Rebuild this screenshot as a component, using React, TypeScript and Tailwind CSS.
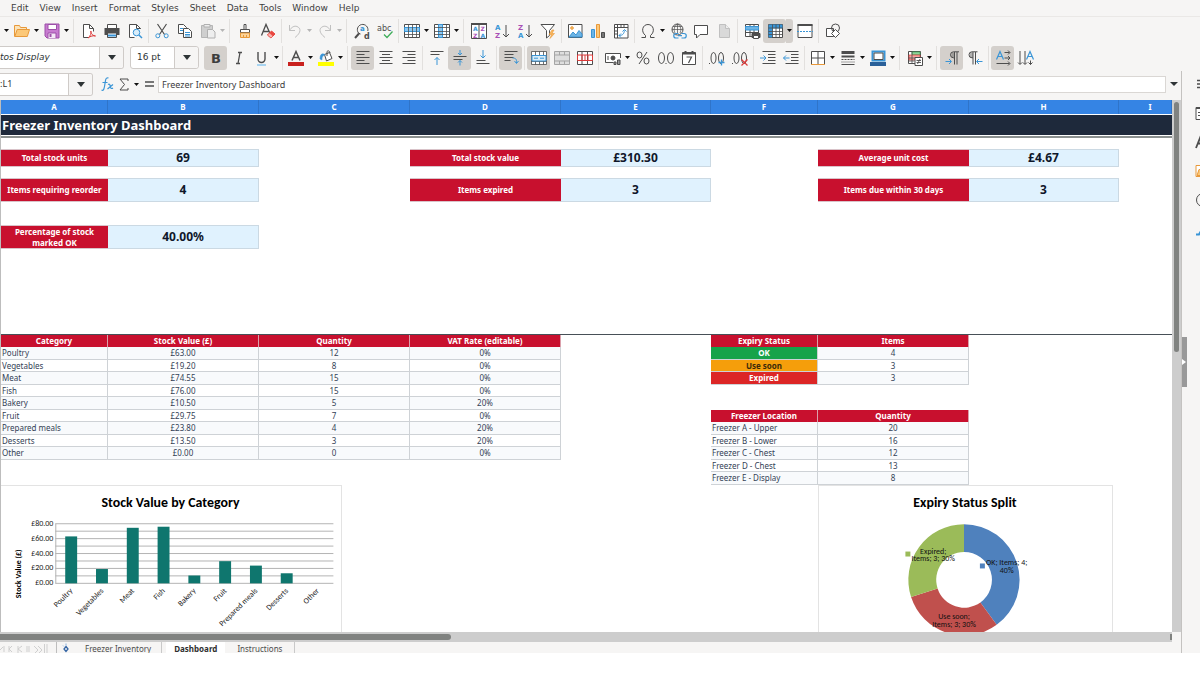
import { ReactNode } from "react";
import clsx from "clsx";

const G = "#4d4d4d";
const B = "#3a95d6";

const menus = ["Edit", "View", "Insert", "Format", "Styles", "Sheet", "Data", "Tools", "Window", "Help"];

const categories = [
    { name: "Poultry", value: 63, qty: 12, vat: "0%" },
    { name: "Vegetables", value: 19.2, qty: 8, vat: "0%" },
    { name: "Meat", value: 74.55, qty: 15, vat: "0%" },
    { name: "Fish", value: 76, qty: 15, vat: "0%" },
    { name: "Bakery", value: 10.5, qty: 5, vat: "20%" },
    { name: "Fruit", value: 29.75, qty: 7, vat: "0%" },
    { name: "Prepared meals", value: 23.8, qty: 4, vat: "20%" },
    { name: "Desserts", value: 13.5, qty: 3, vat: "20%" },
    { name: "Other", value: 0, qty: 0, vat: "0%" },
];

const statuses = [
    { name: "OK", items: 4, style: "bg-[#16a34a] text-white" },
    { name: "Use soon", items: 3, style: "bg-[#f59e0b] text-[#3b2a0a]" },
    { name: "Expired", items: 3, style: "bg-[#dc2626] text-white" },
];

const locations = [
    { name: "Freezer A - Upper", qty: 20 },
    { name: "Freezer B - Lower", qty: 16 },
    { name: "Freezer C - Chest", qty: 12 },
    { name: "Freezer D - Chest", qty: 13 },
    { name: "Freezer E - Display", qty: 8 },
];

function Icon({ children }: { children: ReactNode }) {
    return (
        <svg viewBox="0 0 16 16" className="w-4 h-4 shrink-0 overflow-visible" fill="none" stroke={G} strokeWidth="1" aria-hidden="true">
            {children}
        </svg>
    );
}

function Letter({ x, y, size, fill, bold, children }: {
    x: number, y: number, size: number, fill: string, bold?: boolean, children: ReactNode
}) {
    return (
        <text x={x} y={y} fontSize={size} fill={fill} stroke="none" fontWeight={bold ? 700 : 400} fontFamily="DejaVu Sans, sans-serif">
            {children}
        </text>
    );
}

function Tool({ label, active, children }: { label: string, active?: boolean, children: ReactNode }) {
    return (
        <button
            type="button"
            aria-label={label}
            aria-pressed={active}
            className={clsx("w-[23px] h-6 shrink-0 flex items-center justify-center rounded-[3px]", active && "bg-[#d4d0cc]")}
        >
            <Icon>{children}</Icon>
        </button>
    );
}

function Drop({ label, faded, active }: { label: string, faded?: boolean, active?: boolean }) {
    return (
        <button
            type="button"
            aria-label={label}
            className={clsx("w-[7px] h-6 shrink-0 flex items-center justify-center", active && "bg-[#d4d0cc] rounded-r-[3px]")}
        >
            <svg viewBox="0 0 5 3" className="w-[5px] h-[3px]" aria-hidden="true">
                <path d="M0 0h5L2.5 3z" fill={faded ? "#b5b5b5" : "#111"} />
            </svg>
        </button>
    );
}

function Sep({ size = "sm" }: { size?: "sm" | "md" | "lg" }) {
    const width = { sm: "w-1", md: "w-[5px]", lg: "w-[7px]" }[size];
    return (
        <div className={clsx("h-6 shrink-0 flex justify-center", width)}>
            <div className="w-px h-6 bg-[#e2e0de]"></div>
        </div>
    );
}

function ComboArrow({ label }: { label: string }) {
    return (
        <button type="button" aria-label={label} className="w-6 shrink-0 flex items-center justify-center border-l border-[#cfcbc8] bg-[#f6f5f4] rounded-r-[3px]">
            <svg viewBox="0 0 8 5" className="w-2 h-[5px]" aria-hidden="true"><path d="M0 0h8L4 5z" fill="#2e3436" /></svg>
        </button>
    );
}

function MenuBar() {
    return (
        <nav className="h-[17px] pl-[11px] flex items-center gap-[11px] border-b border-[#eae8e6] text-[9px] leading-4 text-[#3d3d3d]">
            {menus.map(menu => (
                <button type="button" key={menu}>{menu}</button>
            ))}
        </nav>
    );
}

function StandardBar() {
    return (
        <div className="h-[27px] pl-[3px] flex items-center">
            <Drop label="New" />
            <Tool label="Open">
                <path d="M.5 13.5v-11h5l1 2h6v2" stroke="#e8993a" fill="#fbe3b8" />
                <path d="M.8 13.5l2.4-7h12.3l-2.2 7z" stroke="#e8993a" fill="#fcc878" />
            </Tool>
            <Drop label="Open recent" />
            <Tool label="Save">
                <path d="M1 1h14v14H3l-2-2z" stroke="#9c4fa8" fill="#c77bd0" />
                <path d="M4 1.5h8.5v5H4z" fill="#fff" stroke="#9c4fa8" />
                <path d="M4 15v-5h8v5" fill="#f5e8f7" stroke="#9c4fa8" />
                <path d="M6.5 11v3" stroke="#9c4fa8" strokeWidth="2" />
            </Tool>
            <Drop label="Save options" />
            <Sep size="lg" />
            <Tool label="Export as PDF">
                <path d="M7 14.5H2.5v-13h6l4 4v3" fill="#fff" />
                <path d="M8.5 1.5v4h4" />
                <path d="M7 15c2.500-2 3.500-5 3-7c-.8 0 0 4.500 4.500 5c-2-.6-5 0-7.500 2z" stroke="#dd3b3b" />
            </Tool>
            <Tool label="Print">
                <path d="M3.500 5.500v-4h9v4" fill="#fff" />
                <rect x="1" y="5.500" width="14" height="6" fill={G} />
                <path d="M3.500 10h9v4.500h-9z" fill="#fff" />
                <path d="M4 12.500h8" stroke={B} strokeWidth="2" />
            </Tool>
            <Tool label="Print preview">
                <path d="M13.500 6V5.500l-4-4h-7v13h5" fill="#fff" />
                <path d="M9.500 1.500v4h4" />
                <circle cx="9.500" cy="9.500" r="3.300" stroke={B} fill="#d9edf9" />
                <path d="M12 12l3 3" stroke={B} strokeWidth="1.500" />
            </Tool>
            <Sep />
            <Tool label="Cut">
                <path d="M3.500 1l7 10.500M12.500 1l-7 10.500" strokeWidth="1.200" />
                <circle cx="3.800" cy="12.800" r="2" stroke={B} />
                <circle cx="12.200" cy="12.800" r="2" stroke={B} />
            </Tool>
            <Tool label="Copy">
                <path d="M1.500 1.500h5l3 3v6h-8z" fill="#fff" />
                <path d="M3 5.500h3M3 7.500h3" stroke={B} />
                <path d="M6.500 5.500h5l3 3v6h-8z" fill="#fff" />
                <path d="M8 9.500h5M8 11.500h5M8 13h5" stroke={B} />
            </Tool>
            <Tool label="Paste">
                <path d="M1.500 2.500h11v12h-11z" fill="#cfcfcf" stroke="#b5b5b5" />
                <path d="M4 1.500h6v2.500H4z" fill="#eee" stroke="#b0b0b0" />
                <path d="M7.500 6.500h5l2.500 2.500v6H7.500z" fill="#eee" stroke="#b0b0b0" />
            </Tool>
            <Drop label="Paste options" faded />
            <Sep size="lg" />
            <Tool label="Clone formatting">
                <path d="M7 1.500h2v5H7z" fill="#fff" />
                <path d="M3.500 6.500h9v3h-9z" fill="#fff" />
                <path d="M3.500 10h9v4.500h-9z" stroke="#e8993a" fill="#fcd49a" />
                <path d="M6.500 14v-2M9.500 14v-2" stroke="#e8993a" />
            </Tool>
            <Tool label="Clear formatting">
                <path d="M1.500 12.500l4.500-11 4.500 10M3.500 8.500h5.500" strokeWidth="1.300" />
                <path d="M7.500 12l4-4 3.500 3-4 4z" fill="#e9463f" stroke="#e9463f" />
                <path d="M7.500 12l2-2 3.500 3-2 2z" fill="#f7b5b1" stroke="#e9463f" strokeWidth=".5" />
            </Tool>
            <Sep />
            <Tool label="Undo">
                <path d="M2.500 2v5.500H8M2.500 7.500c2-3.500 5-5 7.500-4c4 1.500 4.500 6-2 11" stroke="#c0c0c0" />
            </Tool>
            <Drop label="Undo list" faded />
            <Tool label="Redo">
                <path d="M13.500 2v5.500H8M13.500 7.500c-2-3.500-5-5-7.500-4c-4 1.500-4.500 6 2 11" stroke="#c0c0c0" />
            </Tool>
            <Drop label="Redo list" faded />
            <Sep size="lg" />
            <Tool label="Find and replace">
                <path d="M5 10.500L1 15" strokeWidth="2" />
                <path d="M4.500 10a5.300 5.300 0 1 1 9.300-2M4.500 10l2 1" />
                <Letter x={6} y={8} size={7} fill={B} bold>a</Letter>
                <Letter x={10} y={15.500} size={8} fill={G} bold>d</Letter>
            </Tool>
            <Tool label="Spelling">
                <Letter x={0} y={8} size={8} fill={G}>abc</Letter>
                <path d="M7 11.500l3 3 5.500-6" stroke="#3fae5a" strokeWidth="1.300" />
            </Tool>
            <Sep />
            <Tool label="Row">
                <path d="M.5 1.500h15v13H.5z" fill="#fff" />
                <path d="M.5 4.500h15v4H.5z" fill="#8cc8f0" stroke={B} />
                <path d="M.5 11.500h15M4.500 1.500v13M8.500 1.500v13M12.500 1.500v13" strokeWidth=".8" />
            </Tool>
            <Drop label="Row options" />
            <Tool label="Column">
                <path d="M.5 1.500h15v13H.5z" fill="#fff" />
                <path d="M4.500 1.500h4v13h-4z" fill="#8cc8f0" stroke={B} />
                <path d="M.5 4.500h15M.5 8.500h15M.5 11.500h15M12.500 1.500v13" strokeWidth=".8" />
            </Tool>
            <Drop label="Column options" />
            <Sep size="lg" />
            <Tool label="Sort">
                <path d="M.5 1h15v14.500H.5zM8 1v14" fill="#fff" />
                <path d="M0 1h16" strokeWidth="2" />
                <Letter x={2} y={8} size={6} fill={B} bold>A</Letter>
                <Letter x={2} y={15} size={6} fill="#a94fb5" bold>Z</Letter>
                <Letter x={9.500} y={8} size={6} fill="#a94fb5" bold>Z</Letter>
                <Letter x={9.500} y={15} size={6} fill={B} bold>A</Letter>
            </Tool>
            <Tool label="Sort ascending">
                <Letter x={1} y={6.500} size={7} fill={B} bold>A</Letter>
                <Letter x={1} y={15} size={7} fill="#a94fb5" bold>Z</Letter>
                <path d="M12 2v12M9 11l3 3 3-3" />
            </Tool>
            <Tool label="Sort descending">
                <Letter x={1} y={6.500} size={7} fill="#a94fb5" bold>Z</Letter>
                <Letter x={1} y={15} size={7} fill={B} bold>A</Letter>
                <path d="M12 2v12M9 11l3 3 3-3" />
            </Tool>
            <Tool label="AutoFilter">
                <path d="M1 1.500h13.500l-5 6v5l-3 2.500V7.500z" fill="#fff" />
                <path d="M12 7l-3 4.500h2.500L10 15.500l4.500-5H12l2-3.500z" fill="#f9b65c" stroke="#e8993a" strokeWidth=".6" />
            </Tool>
            <Sep />
            <Tool label="Insert image">
                <path d="M1.500 1.500h13.500v13H1.500z" fill="#fff" />
                <circle cx="5" cy="5" r="1.300" stroke="#e8993a" fill="#fcc878" />
                <path d="M2 14l4-5 3 3 3-4.500 3 3.500v3z" fill="#6db4e4" stroke={B} />
            </Tool>
            <Tool label="Insert chart">
                <path d="M1.500 6.500h3v8h-3z" fill="#6db4e4" stroke={B} />
                <path d="M6.500 1.500h3v13h-3z" fill="#fcc878" stroke="#e8993a" />
                <path d="M11.500 9.500h3v5h-3z" fill="#777" />
            </Tool>
            <Tool label="Insert pivot table">
                <path d="M1.500 1.500h13.500v13.500H1.500zM1.500 4.500h13.500M4.500 1.500v13.500M8 2v2M11 2v2M2 8h2M2 11h2" fill="#fff" />
                <path d="M6 12.500c4 0 5-2 5.500-5M9.500 8.500l2-2 2 2M8 10.500l-2 2 2 2" stroke={B} />
            </Tool>
            <Sep />
            <Tool label="Special character">
                <path d="M1.500 14.500h4v-2c-5-4-3-11 2.500-11s7.500 7 2.500 11v2h4" />
            </Tool>
            <Drop label="Recent characters" />
            <Tool label="Insert hyperlink">
                <circle cx="7.500" cy="6.500" r="5.500" />
                <path d="M2 6.500h11M7.500 1v9M5 10c-1.500-3-1-7 2.500-9c3.500 2 4 6 2.500 9M3 3.500h9" strokeWidth=".7" />
                <path d="M8.500 10.500H6a2 2 0 0 0 0 4.500h2.500M11.500 10.500H14a2 2 0 0 1 0 4.500h-2.500M8 12.700h4" stroke={B} strokeWidth="1.200" />
            </Tool>
            <Tool label="Insert comment">
                <path d="M1.500 2.500h13v9H7l-3.500 3.500v-3.500h-2z" fill="#fff" />
            </Tool>
            <Tool label="Headers and footers">
                <path d="M3.500 1.500h6l4 4v9h-10z" fill="#d9d9d9" stroke="#c0c0c0" />
                <path d="M9.500 1.500v4h4" fill="#eee" stroke="#c0c0c0" />
            </Tool>
            <Sep size="md" />
            <Tool label="Print range">
                <path d="M1.500 1.500h13v12h-13zM6 1.500v12M10 1.500v12M1.500 9.500h13" fill="#fff" />
                <path d="M1.500 3.500h13v3.500h-13z" fill="#6db4e4" stroke={B} />
                <path d="M8 10.500h8v4H8z" fill={G} />
                <path d="M9.500 12.500h5v3h-5z" fill="#fff" />
            </Tool>
            <Tool label="Freeze rows and columns" active>
                <path d="M1.500 1.500h14v13h-14z" fill="#fff" />
                <path d="M2 2h13v3H5v9H2z" fill="#3a95d6" stroke={B} />
                <path d="M1.500 5h14M1.500 8.500h14M1.500 11.500h14M5.500 1.500v13M9 1.500v13M12.500 1.500v13" strokeWidth=".8" />
            </Tool>
            <Drop label="Freeze options" active />
            <Tool label="Split window">
                <path d="M1 1.500h14v13H1z" fill="#fff" />
                <path d="M.5 2h15" strokeWidth="2" />
                <path d="M0 8.500h16" stroke={B} strokeDasharray="2 1" />
            </Tool>
            <Sep size="md" />
            <Tool label="Show draw functions">
                <path d="M1.500 5.500h7v8h-7z" fill="#fff" />
                <circle cx="10.500" cy="5" r="4" />
                <path d="M10.500 6.500l4 4-4 4-4-4z" fill="#fff" />
            </Tool>
        </div>
    );
}

function FormattingBar() {
    return (
        <div className="h-[27px] flex items-center">
            <div className="w-[124px] h-[23px] mr-[6px] shrink-0 flex border border-l-0 border-[#cfcbc8] rounded-r-[3px] bg-white">
                <input aria-label="Font name" defaultValue="tos Display" className="min-w-0 flex-1 text-[9px] italic text-[#2e3436] outline-none" />
                <ComboArrow label="Font list" />
            </div>
            <div className="w-[69px] h-[23px] mr-[5px] shrink-0 flex border border-[#cfcbc8] rounded-[3px] bg-white">
                <input aria-label="Font size" defaultValue="16 pt" className="min-w-0 flex-1 pl-[6px] text-[9px] text-[#2e3436] outline-none" />
                <ComboArrow label="Size list" />
            </div>
            <Tool label="Bold" active><Letter x={3} y={12.500} size={13} fill="#3d3d3d" bold>B</Letter></Tool>
            <Tool label="Italic"><path d="M7 2.500h4M5 13.500h4M9 2.500l-2 11" strokeWidth="1.300" /></Tool>
            <Tool label="Underline">
                <path d="M4 2v7a3.500 3.500 0 0 0 7 0V2" strokeWidth="1.400" />
                <path d="M3 15h9" stroke="#8cc8f0" strokeWidth="1.500" />
            </Tool>
            <Drop label="Underline options" />
            <Sep />
            <Tool label="Font color">
                <path d="M4 10.500l4-9 4 9M5.500 7.500h5" strokeWidth="1.500" />
                <path d="M0 14h16" stroke="#c9211e" strokeWidth="4" />
            </Tool>
            <Drop label="Font color options" />
            <Tool label="Highlighting">
                <path d="M6.500 4.500l5-2 2.500 6-5.500 2.500z" fill="#fff" />
                <path d="M9 6V1.500c1.500-1.500 3 0 3 1.500" />
                <path d="M2 9c0-5 2-6 5-4.500l-2 1.500c-1 1-1 2-1 4z" fill={B} stroke={B} strokeWidth=".5" />
                <path d="M0 14h16" stroke="#ffff00" strokeWidth="4" />
            </Tool>
            <Drop label="Highlighting options" />
            <Sep size="lg" />
            <Tool label="Align left" active><path d="M1.500 1.500h13M1.500 4.500h8M1.500 7.500h13M1.500 10.500h8M1.500 13.500h13" /></Tool>
            <Tool label="Align center"><path d="M1.500 1.500h13M4 4.500h8M1.500 7.500h13M4 10.500h8M1.500 13.500h13" /></Tool>
            <Tool label="Align right"><path d="M1.500 1.500h13M6.500 4.500h8M1.500 7.500h13M6.500 10.500h8M1.500 13.500h13" /></Tool>
            <Sep size="md" />
            <Tool label="Align top">
                <path d="M1.500 1.500h13M1.500 4.500h9" />
                <path d="M8 15V7.500M5.500 10L8 7.500l2.500 2.500" stroke={B} />
            </Tool>
            <Tool label="Center vertically" active>
                <path d="M1.500 6.500h13M1.500 9.500h9" />
                <path d="M8 0v5M6 3l2 2 2-2M8 15.500v-5M6 12.500l2-2 2 2" stroke={B} />
            </Tool>
            <Tool label="Align bottom">
                <path d="M1.500 10.500h9M1.500 13.500h13" />
                <path d="M8 0v8M5.500 5.500L8 8l2.500-2.500" stroke={B} />
            </Tool>
            <Sep size="md" />
            <Tool label="Wrap text" active>
                <path d="M1.500 1.500h13M1.500 4.500h9M1.500 7.500h9M1.500 10.500h6" />
                <path d="M9.500 8c3 0 4.500 1 4 5M11.500 11l2 2.500 2-2.500" stroke={B} />
            </Tool>
            <Sep size="md" />
            <Tool label="Merge and center cells" active>
                <path d="M.5 1.500h15v13H.5zM.5 11.500h15M4.500 1.500v13M8.500 1.500v13M12.500 1.500v13" fill="#fff" strokeWidth=".8" />
                <path d="M1 5.500h14v5.500H1z" fill="#d9edf9" stroke={B} />
                <path d="M3 8.200h10" stroke={B} strokeDasharray="4 2" />
            </Tool>
            <Tool label="Merge cells">
                <path d="M.5 1.500h15v13H.5zM.5 5h15M.5 11h15M5.500 1.500V5M10.500 1.500V5M5.500 11v3.500M10.500 11v3.500" fill="#dedede" stroke="#a5a5a5" />
            </Tool>
            <Tool label="Unmerge cells">
                <path d="M.5 1.500h15v13H.5zM5 1.500v13M10.500 1.500v13" fill="#fff" />
                <path d="M.5 5h15M.5 10.500h15M5 5v5.500M8 5v5.500M11 5v5.500M.5 5v5.500M15.500 5v5.500" stroke="#dd3b3b" />
            </Tool>
            <Sep size="md" />
            <Tool label="Format as currency">
                <path d="M15.500 8V3.500H.5v9h8" fill="#fff" />
                <circle cx="8" cy="8" r="2" fill={G} />
                <path d="M9 12h2v2.500H9zM12.500 10H15v4.500h-2.500zM3 6v4" fill="#999" />
            </Tool>
            <Drop label="Currency options" />
            <Tool label="Format as percent">
                <ellipse cx="4.500" cy="5" rx="2.500" ry="3" /><ellipse cx="11.500" cy="11" rx="2.500" ry="3" /><path d="M12 2L4 14" />
            </Tool>
            <Tool label="Format as number">
                <ellipse cx="3.500" cy="8" rx="3" ry="5.500" /><ellipse cx="12.500" cy="8" rx="3" ry="5.500" /><path d="M7.500 13.500h1" />
            </Tool>
            <Tool label="Format as date">
                <path d="M1.500 2.500h13v12h-13z" fill="#fff" />
                <path d="M1.500 3.500h13M4.500 1v3M11.500 1v3" strokeWidth="2" />
                <path d="M5.500 7h5l-3 6" strokeWidth="1.200" />
            </Tool>
            <Sep size="md" />
            <Tool label="Add decimal place">
                <path d="M0 13.500h1" /><ellipse cx="4.500" cy="8" rx="2.500" ry="5.500" /><ellipse cx="12" cy="8" rx="2.500" ry="5.500" />
                <path d="M12.500 9.500v6M9.500 12.500h6" stroke={B} strokeWidth="1.300" />
            </Tool>
            <Tool label="Delete decimal place">
                <path d="M0 13.500h1" /><ellipse cx="4.500" cy="8" rx="2.500" ry="5.500" /><ellipse cx="12" cy="8" rx="2.500" ry="5.500" />
                <path d="M9.500 9.500l6 6M15.500 9.500l-6 6" stroke="#dd3b3b" strokeWidth="1.200" />
            </Tool>
            <Sep size="md" />
            <Tool label="Increase indent">
                <path d="M2.500 1.500h13M8 4.500h7.500M8 7.500h7.500M8 10.500h7.500M2.500 13.500h13" />
                <path d="M0 8h6M3.500 5.500L6 8l-2.500 2.500" stroke={B} />
            </Tool>
            <Tool label="Decrease indent">
                <path d="M2.500 1.500h13M8 4.500h7.500M8 7.500h7.500M8 10.500h7.500M2.500 13.500h13" />
                <path d="M.5 8h6M3 5.500L.5 8 3 10.500" stroke={B} />
            </Tool>
            <Sep />
            <Tool label="Borders">
                <path d="M1.500 14.500v-13h13v13M1.500 8h13M8 1.500v13" fill="#fff" />
                <path d="M1 14.500h14" stroke="#e8993a" />
            </Tool>
            <Drop label="Border options" />
            <Tool label="Border style">
                <path d="M1.500 2.500h13" strokeWidth="3" /><path d="M1.500 6.500h13" strokeWidth="2" />
                <path d="M1.500 9.500h13" strokeDasharray="2 1" /><path d="M1.500 12h13" strokeDasharray="1 1" /><path d="M1.500 14.500h13" />
            </Tool>
            <Drop label="Border style options" />
            <Tool label="Border color">
                <path d="M2.500 1.500h12v9h-12z" fill="#fff" stroke={B} strokeWidth="2" />
                <path d="M4 3h9v6.500H4z" />
                <path d="M0 14h16" stroke="#2a6099" strokeWidth="4" />
            </Tool>
            <Drop label="Border color options" />
            <Sep size="lg" />
            <Tool label="Conditional formatting">
                <path d="M1.500 1.500h12v12h-12z" fill="#fff" />
                <path d="M5 2h8v2.500H5z" fill="#8fd19a" stroke="#3fae5a" strokeWidth=".7" />
                <path d="M2 5h11v5H2z" fill="#f7a5a1" stroke="#dd3b3b" strokeWidth=".7" />
                <path d="M5 1.500v12M1.500 8h12M1.500 11h6" strokeWidth=".8" />
                <path d="M8 7.500h7.500v8H8z" fill="#fff" />
                <path d="M9.500 10.500H14M9.500 12.500H14M13 9l-2.500 5" strokeWidth=".9" />
            </Tool>
            <Drop label="Conditional options" />
            <Sep size="lg" />
            <Tool label="Left to right" active>
                <path d="M13 2v12.500M10.500 2v12.500M15 1.800H9.500a3 3 0 0 0 0 6h1" />
                <path d="M7.500 2.500h3v5h-3z" fill={G} opacity=".4" stroke="none" />
                <path d="M1.500 11.500H7M5 9l2.500 2.500L5 14" stroke={B} />
            </Tool>
            <Tool label="Right to left">
                <path d="M8.500 2v12.500M6 2v12.500M10.500 1.800H5a3 3 0 0 0 0 6h1" />
                <path d="M3 2.500h3v5H3z" fill={G} opacity=".4" stroke="none" />
                <path d="M15.500 11.500H10M12 9l-2.500 2.500L12 14" stroke={B} />
            </Tool>
            <Sep size="md" />
            <Tool label="Text direction from left to right" active>
                <path d="M1.500 9.500L5 1.500l3.500 8M3 6.500h4" stroke={B} strokeWidth="1.200" />
                <path d="M9.500 2.500h5M13 .5l2 2-2 2M9.500 8h5M13 6l2 2-2 2M1.500 13.500h13M13 11.500l2 2-2 2" />
            </Tool>
            <Tool label="Text direction from top to bottom">
                <path d="M8.500 9.500L12 1.500l3.500 8M10 6.500h4" stroke={B} strokeWidth="1.200" />
                <path d="M2 1v13M0 12.500l2 2 2-2M7 1v13M5 12.500l2 2 2-2M12.500 10.500v4M10.500 12.500l2 2 2-2" />
            </Tool>
        </div>
    );
}

function FormulaBar() {
    return (
        <div className="h-[29px] pb-[3px] flex items-center">
            <div className="w-[93px] h-[23px] mr-[2px] shrink-0 flex border border-l-0 border-[#cfcbc8] rounded-r-[3px] bg-white">
                <input aria-label="Name box" defaultValue=":L1" className="min-w-0 flex-1 text-[9px] text-[#2e3436] outline-none" />
                <ComboArrow label="Named ranges" />
            </div>
            <Tool label="Function wizard">
                <path d="M2.500 14c2 1 2.500-1 3-3.500l1-6c.4-2.500 1.500-3 3-2.500M3.500 6.500h5" stroke={B} strokeWidth="1.200" />
                <path d="M9 8.500c1.500-1 2 0 2.300 2s1.300 2.500 2.700 1.500M14 8.500l-5.500 4.500" stroke={B} strokeWidth="1.200" />
            </Tool>
            <button type="button" aria-label="Select function" className="w-3 h-5 mr-[3px] shrink-0 flex items-center justify-center">
                <svg viewBox="0 0 10 13" className="w-[10px] h-[13px]" fill="none" stroke={G} aria-hidden="true">
                    <path d="M9 3V1H1l4.500 5.500L1 12h8v-2" />
                </svg>
            </button>
            <Drop label="Function list" />
            <button type="button" aria-label="Formula" className="w-[18px] h-5 shrink-0 flex items-center justify-center">
                <svg viewBox="0 0 9 6" className="w-[9px] h-[6px]" aria-hidden="true"><path d="M0 1h9M0 5h9" stroke={G} strokeWidth="1.500" /></svg>
            </button>
            <input
                aria-label="Input line"
                defaultValue="Freezer Inventory Dashboard"
                className="min-w-0 flex-1 h-[17px] pl-[3px] border border-[#dad7d4] bg-white font-['Noto_Sans',sans-serif] text-[9px] text-[#3d3d3d] outline-none"
            />
            <button type="button" aria-label="Expand formula bar" className="w-[15px] h-5 shrink-0 flex items-center justify-center">
                <svg viewBox="0 0 8 4" className="w-2 h-1" aria-hidden="true"><path d="M0 0h8L4 4z" fill="#2e3436" /></svg>
            </button>
        </div>
    );
}

function HeadCell({ children }: { children: ReactNode }) {
    return <th scope="col" className="p-0 bg-[#c8102e] text-white font-bold border-r border-[#dba0ab]">{children}</th>;
}

function ValueCell({ shade, children }: { shade: boolean, children: ReactNode }) {
    return (
        <td className={clsx("p-0 text-center border-r border-b border-[#ced2d6]", shade ? "bg-[#f8fafc]" : "bg-white")}>
            {children}
        </td>
    );
}

function NameCell({ shade, children }: { shade: boolean, children: ReactNode }) {
    return (
        <td className={clsx("p-0 pl-px text-left whitespace-nowrap border-r border-b border-[#ced2d6]", shade ? "bg-[#f8fafc]" : "bg-white")}>
            {children}
        </td>
    );
}

function Kpi({ label, value }: { label: string, value: string }) {
    return (
        <>
            <th scope="row" className="p-0 bg-[#c8102e] text-white font-bold text-center border-t border-b border-[#d9c3c9]">{label}</th>
            <td className="p-0 bg-[#e0f2fe] text-[#0f172a] text-[12px] leading-3 font-bold text-center border border-l-0 border-[#cbd9e3]">{value}</td>
        </>
    );
}

function Sheet() {
    return (
        <table className="w-full table-fixed border-separate border-spacing-0 text-[8px] leading-[10px] text-[#334155]">
            <colgroup>
                <col className="w-[107px]" />
                <col className="w-[151px]" />
                <col className="w-[151px]" />
                <col className="w-[151px]" />
                <col className="w-[150px]" />
                <col className="w-[107px]" />
                <col className="w-[151px]" />
                <col className="w-[150px]" />
                <col />
            </colgroup>
            <thead>
                <tr className="h-[14px]">
                    {["A", "B", "C", "D", "E", "F", "G", "H", "I"].map(col => (
                        <th scope="col" key={col} className="p-0 pb-px last:pl-[10px] bg-[#3584e4] text-white font-bold border-r border-[#2f74c9]">{col}</th>
                    ))}
                </tr>
            </thead>
            <tbody>
                <tr className="h-[22px]">
                    <th colSpan={9} className="p-0 pl-px text-left bg-[#1e293b] text-white text-[13px] leading-[18px] font-bold border-y border-white">
                        Freezer Inventory Dashboard
                    </th>
                </tr>
                <tr className="h-[13px]"><td colSpan={9} className="p-0 border-t-2 border-[#8b908f]"></td></tr>
                <tr className="h-[18px]">
                    <Kpi label="Total stock units" value="69" />
                    <td></td>
                    <Kpi label="Total stock value" value="£310.30" />
                    <td></td>
                    <Kpi label="Average unit cost" value="£4.67" />
                    <td></td>
                </tr>
                <tr className="h-[11px]"><td colSpan={9} className="p-0"></td></tr>
                <tr className="h-6">
                    <Kpi label="Items requiring reorder" value="4" />
                    <td></td>
                    <Kpi label="Items expired" value="3" />
                    <td></td>
                    <Kpi label="Items due within 30 days" value="3" />
                    <td></td>
                </tr>
                <tr className="h-[23px]"><td colSpan={9} className="p-0"></td></tr>
                <tr className="h-6 leading-[11px]">
                    <Kpi label="Percentage of stock marked OK" value="40.00%" />
                    <td colSpan={7}></td>
                </tr>
                <tr className="h-[86px]"><td colSpan={9} className="p-0 border-b border-[#475057]"></td></tr>
                <tr className="h-3">
                    <HeadCell>Category</HeadCell>
                    <HeadCell>Stock Value (£)</HeadCell>
                    <HeadCell>Quantity</HeadCell>
                    <HeadCell>VAT Rate (editable)</HeadCell>
                    <td className="p-0"></td>
                    <HeadCell>Expiry Status</HeadCell>
                    <HeadCell>Items</HeadCell>
                    <td className="p-0" colSpan={2}></td>
                </tr>
                {Array.from({ length: 11 }, (_, i) => {
                    const category = categories[i];
                    const status = statuses[i];
                    const location = locations[i - 6];
                    const shade = i % 2 === 0;
                    return (
                        <tr key={i} className={shade ? "h-[13px]" : "h-3"}>
                            {category ? (
                                <>
                                    <NameCell shade={shade}>{category.name}</NameCell>
                                    <ValueCell shade={shade}>£{category.value.toFixed(2)}</ValueCell>
                                    <ValueCell shade={shade}>{category.qty}</ValueCell>
                                    <ValueCell shade={shade}>{category.vat}</ValueCell>
                                </>
                            ) : <td className="p-0" colSpan={4}></td>}
                            <td className="p-0"></td>
                            {status && (
                                <>
                                    <th scope="row" className={clsx("p-0 font-bold text-center border-r border-b border-[#ced2d6]", status.style)}>{status.name}</th>
                                    <ValueCell shade={shade}>{status.items}</ValueCell>
                                </>
                            )}
                            {i === 5 && (
                                <>
                                    <HeadCell>Freezer Location</HeadCell>
                                    <HeadCell>Quantity</HeadCell>
                                </>
                            )}
                            {location && (
                                <>
                                    <NameCell shade={shade}>{location.name}</NameCell>
                                    <ValueCell shade={shade}>{location.qty}</ValueCell>
                                </>
                            )}
                            {!status && !location && i !== 5 && <td className="p-0" colSpan={2}></td>}
                            <td className="p-0" colSpan={2}></td>
                        </tr>
                    );
                })}
            </tbody>
        </table>
    );
}

function BarChart() {
    const base = 98;
    const scale = 60 / 80;
    return (
        <svg viewBox="0 0 341 147" className="w-[341px] h-[147px] shrink-0 border-t border-r border-[#e3e3e3] font-['Carlito','Lato',sans-serif]" role="img" aria-label="Stock Value by Category">
            <text x="170" y="21" textAnchor="middle" fontSize="14" fontWeight="700">Stock Value by Category</text>
            {[0, 10, 20, 30, 40, 50, 60, 70, 80].map(v => (
                <path key={v} d={`M54 ${base - v * scale}H334`} stroke="#b3b3b3" />
            ))}
            <path d="M54.500 38v60" stroke="#b3b3b3" />
            {[0, 20, 40, 60, 80].map(v => (
                <text key={v} x="52" y={base - v * scale + 2} textAnchor="end" fontSize="8" fill="#222">£{v.toFixed(2)}</text>
            ))}
            <text transform="translate(19 113) rotate(-90)" fontSize="8" fontWeight="700">Stock Value (£)</text>
            {categories.map((c, i) => {
                const x = 70 + i * 31;
                return (
                    <g key={c.name}>
                        <rect x={x - 6} y={base - c.value * scale} width="12" height={c.value * scale} fill="#0f766e" />
                        <text transform={`translate(${x + 2} 106) rotate(-45)`} textAnchor="end" fontSize="8" fill="#222">{c.name}</text>
                    </g>
                );
            })}
        </svg>
    );
}

function DonutChart() {
    return (
        <svg viewBox="0 0 295 147" className="w-[295px] h-[147px] shrink-0 bg-white border-t border-x border-[#e3e3e3] font-['Carlito','Lato',sans-serif]" role="img" aria-label="Expiry Status Split">
            <text x="147" y="21" textAnchor="middle" fontSize="14" fontWeight="700">Expiry Status Split</text>
            <path d="M146 38.500A56 56 0 0 1 178.900 139.800L162.500 117.200A28 28 0 0 0 146 66.500z" fill="#4f81bd" />
            <path d="M178.900 139.800A56 56 0 0 1 92.700 111.800L119.400 103.200A28 28 0 0 0 162.500 117.200z" fill="#c0504d" />
            <path d="M92.700 111.800A56 56 0 0 1 146 38.500V66.500A28 28 0 0 0 119.400 103.200z" fill="#9bbb59" />
            <rect x="87" y="66" width="5" height="5" fill="#9bbb59" />
            <rect x="162" y="78" width="5" height="5" fill="#4f81bd" />
            <g fontSize="8" textAnchor="middle" fill="#111">
                <text x="115" y="68">Expired;</text>
                <text x="115" y="76">Items; 3; 30%</text>
                <text x="189" y="80">OK; Items; 4;</text>
                <text x="189" y="88">40%</text>
                <text x="136" y="134">Use soon;</text>
                <text x="136" y="142">Items; 3; 30%</text>
            </g>
        </svg>
    );
}

function SheetTabs() {
    return (
        <div className="h-[11px] overflow-hidden flex items-start bg-[#f6f5f4] text-[8px] leading-[14px] text-[#4d4d4d]">
            <svg viewBox="0 0 48 11" className="w-12 h-[11px] shrink-0" fill="none" stroke="#cfcfcf" aria-hidden="true">
                <path d="M0 8l3-3M4 10V4M9 4v6M12 4l-3 3 3 3M18 4v7M22 4l-4 3 4 3M27 4v6M29 10V4M34 4l4 4-3 3M38 4l4 4-3 3M44.500 2v9M47 2v9" />
            </svg>
            <div className="w-px h-[11px] ml-2 bg-[#bdbdbd]"></div>
            <button type="button" aria-label="Add sheet" className="w-[18px] h-[11px] flex justify-center">
                <svg viewBox="0 0 8 11" className="w-2 h-[11px]" fill="none" aria-hidden="true">
                    <path d="M4 4.500l2 2.500-2 2.500L2 7z" stroke="#3465a4" strokeWidth="1.300" />
                    <path d="M4 1.500v2M1 3.500l1 1" stroke="#8ab0dc" />
                </svg>
            </button>
            <button type="button" className="px-[10px] border-r border-[#c9c9c9]">Freezer Inventory</button>
            <button type="button" aria-current="page" className="ml-1 px-2 bg-white font-bold text-[#2e2e2e]">Dashboard</button>
            <button type="button" className="px-[12px] border-r border-[#c9c9c9]">Instructions</button>
        </div>
    );
}

function Sidebar() {
    return (
        <aside className="w-[19px] shrink-0 overflow-hidden flex border-l border-[#c4c2c0]">
            <div className="w-[13px] shrink-0 flex items-center">
                <button type="button" aria-label="Hide sidebar" className="w-[5px] h-[50px] bg-[#999] flex items-center">
                    <svg viewBox="0 0 4 6" className="w-1 h-[6px]" aria-hidden="true"><path d="M0 0l4 3-4 3z" fill="#fff" /></svg>
                </button>
            </div>
            <div className="pt-[5px] flex flex-col gap-[13px]">
                <Icon><path d="M2 4.500h12M2 8h12M2 11.500h12" strokeWidth="1.500" /></Icon>
                <Icon><path d="M1 2.500h14v12H1zM3 7.500h5M3 10.500h5" fill="#fff" /><path d="M1 3h14" strokeWidth="2" /></Icon>
                <Icon><path d="M1 14L6 1.500 11 14M3 9.500h6" strokeWidth="1.800" /></Icon>
                <Icon><path d="M1 2.500h14v11H1z" stroke="#e8993a" fill="#fff" /><path d="M2 12.500l2-6h11v6z" fill="#fcc878" stroke="#e8993a" /></Icon>
                <Icon><circle cx="8" cy="8" r="6.500" /><path d="M5 11l6-6-2 4.500z" /></Icon>
                <Icon><path d="M1 13.500h3l5-9" stroke={B} strokeWidth="2" /></Icon>
            </div>
        </aside>
    );
}

export default function App() {
    return (
        <div className="min-h-screen bg-white font-['DejaVu_Sans',sans-serif]">
            <div className="bg-[#f6f5f4] overflow-hidden">
                <MenuBar />
                <StandardBar />
                <FormattingBar />
                <div className="flex">
                    <main className="min-w-0 flex-1 font-['Noto_Sans',sans-serif]">
                        <FormulaBar />
                        <div className="flex">
                            <div className="min-w-0 flex-1 bg-white border-l border-[#bdbdbd]">
                                <Sheet />
                                <div className="h-[147px] overflow-hidden flex">
                                    <BarChart />
                                    <div className="w-[476px] shrink-0"></div>
                                    <DonutChart />
                                </div>
                            </div>
                            <div className="w-[9px] shrink-0 pt-[2px] bg-[#cdcdcd] flex justify-center">
                                <div className="w-[5px] h-[250px] rounded-full bg-[#808280]"></div>
                            </div>
                        </div>
                        <div className="h-[10px] pr-[9px] flex">
                            <div className="flex-1 bg-[#cdcdcd] flex items-center justify-between">
                                <div className="w-[451px] h-[6px] rounded-r-full bg-[#808280]"></div>
                                <div className="w-[2px] h-[6px] bg-[#808280]"></div>
                            </div>
                        </div>
                        <SheetTabs />
                    </main>
                    <Sidebar />
                </div>
            </div>
        </div>
    );
}
